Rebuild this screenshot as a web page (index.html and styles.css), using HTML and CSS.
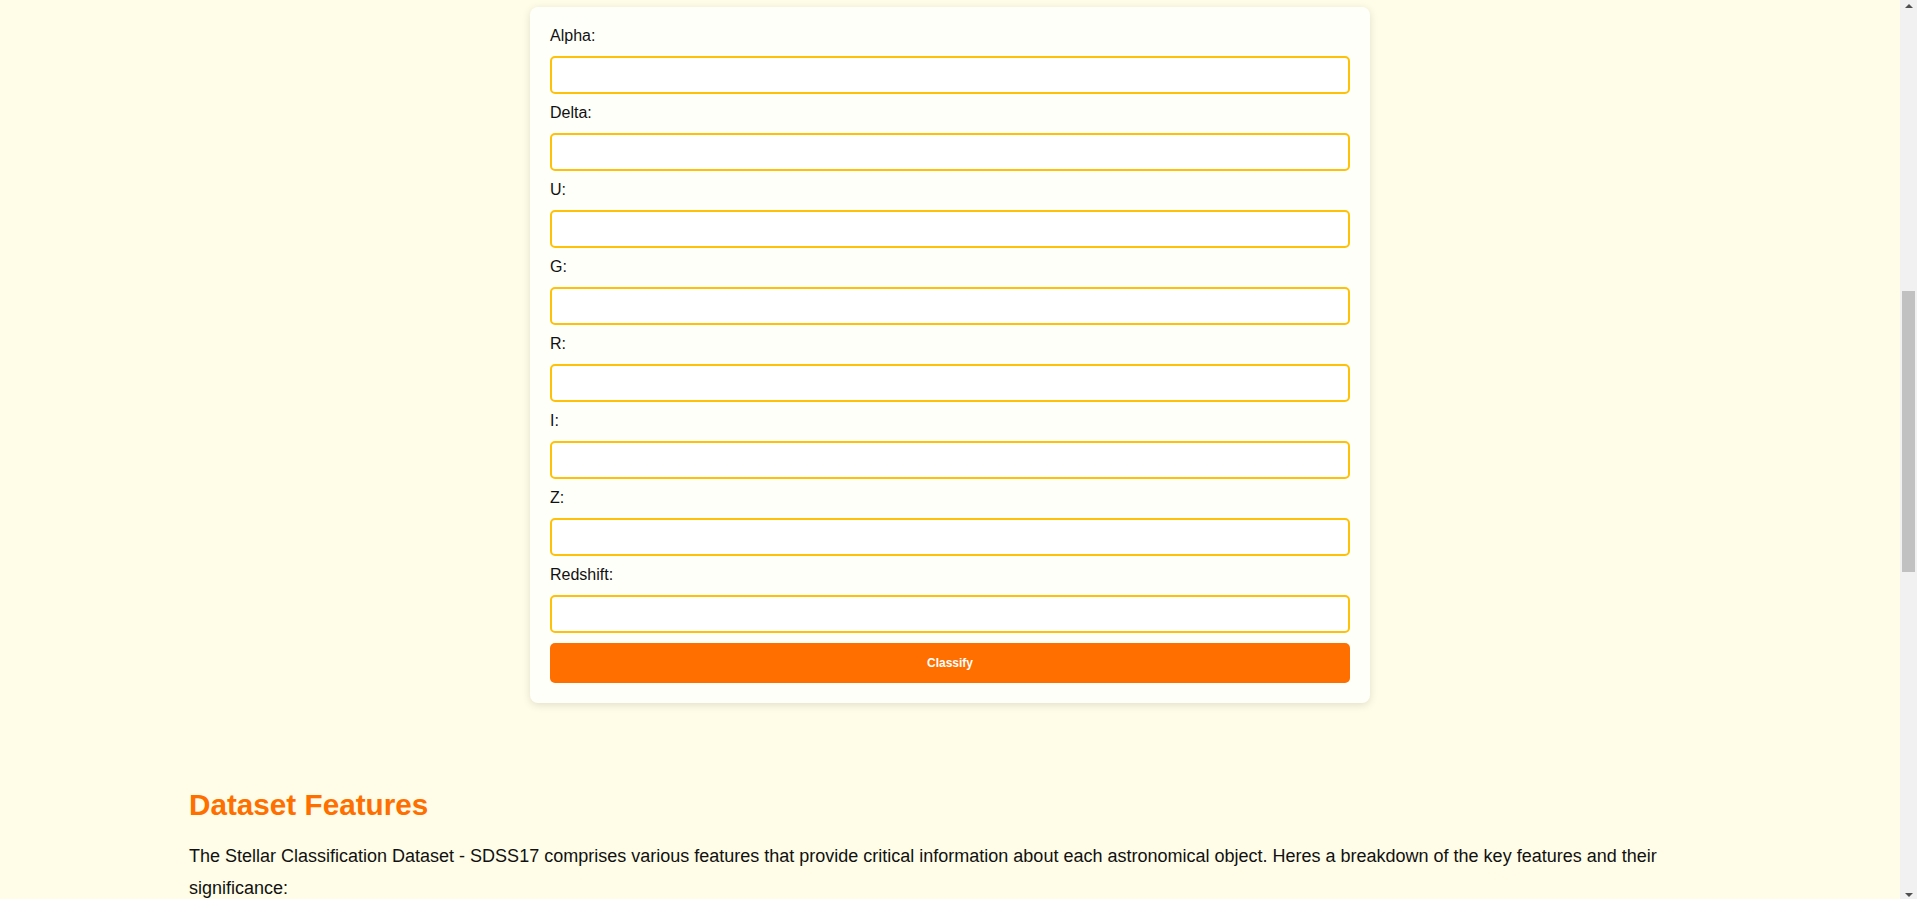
FILE: index.html
```html
<!DOCTYPE html>
<html lang="en">
<head>
<meta charset="utf-8">
<title>Stellar Classification</title>
<link rel="stylesheet" href="styles.css">
</head>
<body>
<div class="page">
  <form class="card">
    <label class="field-label" for="alpha">Alpha:</label>
    <input class="field-input" id="alpha" type="text">
    <label class="field-label" for="delta">Delta:</label>
    <input class="field-input" id="delta" type="text">
    <label class="field-label" for="u">U:</label>
    <input class="field-input" id="u" type="text">
    <label class="field-label" for="g">G:</label>
    <input class="field-input" id="g" type="text">
    <label class="field-label" for="r">R:</label>
    <input class="field-input" id="r" type="text">
    <label class="field-label" for="i">I:</label>
    <input class="field-input" id="i" type="text">
    <label class="field-label" for="z">Z:</label>
    <input class="field-input" id="z" type="text">
    <label class="field-label" for="redshift">Redshift:</label>
    <input class="field-input" id="redshift" type="text">
    <button class="classify-btn" type="button">Classify</button>
  </form>

  <section class="features">
    <h2 class="features-title">Dataset Features</h2>
    <p class="features-text">The Stellar Classification Dataset - SDSS17 comprises various features that provide critical information about each astronomical object. Heres a breakdown of the key features and their significance:</p>
  </section>
</div>
<div class="scrollbar" aria-hidden="true">
  <div class="scroll-arrow scroll-up"></div>
  <div class="scroll-track"><div class="scroll-thumb"></div></div>
  <div class="scroll-arrow scroll-down"></div>
</div>
</body>
</html>
```

FILE: styles.css
```css
html, body {
  margin: 0;
  padding: 0;
  height: 100%;
  overflow: hidden;
}

body {
  background: #fffde7;
  font-family: "Liberation Sans", Arial, sans-serif;
  color: #111;
}

.page {
  width: 1900px;
}

.card {
  box-sizing: border-box;
  width: 840px;
  margin: 7px auto 0;
  padding: 20px;
  background: #fffffa;
  border-radius: 8px;
  box-shadow: 0 2px 8px rgba(0, 0, 0, 0.12);
  display: flex;
  flex-direction: column;
}

.field-label {
  display: block;
  font-size: 16px;
  line-height: 17px;
  margin-bottom: 12px;
  color: #111;
}

.field-input {
  display: block;
  box-sizing: border-box;
  width: 100%;
  height: 38px;
  margin: 0 0 10px;
  border: 2px solid #ffc107;
  border-radius: 5px;
  background: #fff;
  outline: none;
}

.classify-btn {
  display: block;
  width: 100%;
  height: 40px;
  border: none;
  border-radius: 5px;
  background: #ff6f00;
  color: #fff;
  font-family: "Liberation Sans", Arial, sans-serif;
  font-size: 12px;
  font-weight: bold;
}

.features {
  box-sizing: border-box;
  width: 1522px;
  margin: 0 auto;
  padding-top: 85px;
}

.features-title {
  margin: 0 0 18px;
  font-size: 29.7px;
  line-height: 34px;
  font-weight: bold;
  color: #ff6f00;
}

.features-text {
  margin: 0;
  font-size: 18px;
  line-height: 1.8;
  color: #111;
}

.scrollbar {
  position: fixed;
  top: 0;
  right: 0;
  width: 17px;
  height: 100%;
  background: #f1f1f1;
  display: flex;
  flex-direction: column;
}

.scroll-arrow {
  height: 17px;
  display: flex;
  align-items: center;
  justify-content: center;
}

.scroll-up::before {
  content: "";
  border-left: 4px solid transparent;
  border-right: 4px solid transparent;
  border-bottom: 4px solid #505050;
  margin-top: -6px;
}

.scroll-down::before {
  content: "";
  border-left: 4px solid transparent;
  border-right: 4px solid transparent;
  border-top: 4px solid #505050;
  margin-bottom: -8px;
}

.scroll-track {
  flex: 1;
  position: relative;
}

.scroll-thumb {
  position: absolute;
  left: 2px;
  right: 2px;
  top: 274px;
  height: 281px;
  background: #c1c1c1;
}
```
